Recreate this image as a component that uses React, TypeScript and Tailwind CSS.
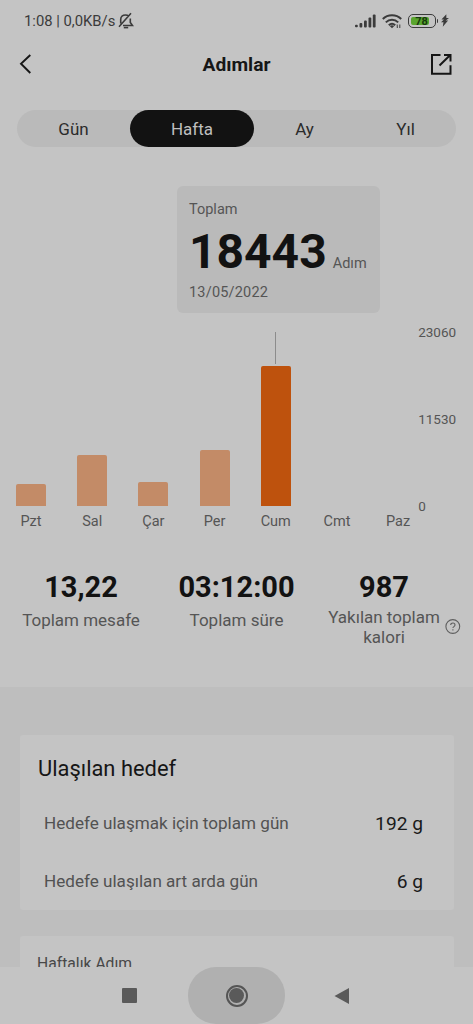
const days = [
  { label: 'Pzt', height: 22 },
  { label: 'Sal', height: 51 },
  { label: 'Çar', height: 24.5 },
  { label: 'Per', height: 56 },
  { label: 'Cum', height: 140, active: true },
  { label: 'Cmt', height: 0 },
  { label: 'Paz', height: 0 },
];

function StatusBar() {
  return (
    <div className="flex h-[41px] shrink-0 items-center justify-between pr-[24px] pl-[24px] text-[#3b3b3b]">
      <div className="flex items-center gap-[3px]">
        <span className="text-[14.8px] leading-5 whitespace-pre">1:08 | 0,0KB/s</span>
        <svg width="16" height="18" viewBox="0 0 16 18" fill="none" stroke="currentColor" strokeWidth="1.6">
          <path d="M2.700 11.500V7.500C2.700 4.500 4.700 3 7.500 3c1.200 0 2.300.3 3.100 1M12.300 6.500V10.500l2.200 3H5M13 1.300 1 14.700" />
          <path d="M5.800 15.600h4.400" />
        </svg>
      </div>
      <div className="flex items-center">
        <svg width="21" height="14" viewBox="0 0 21 14" fill="currentColor">
          <rect x="0" y="10.800" width="2.800" height="2.500" rx="1" />
          <rect x="4.500" y="9" width="2.800" height="4.500" rx="1" />
          <rect x="9" y="6.500" width="2.800" height="7" rx="1" />
          <rect x="13.500" y="3.500" width="2.800" height="10" rx="1" />
          <rect x="17.800" y="0.500" width="2.800" height="13" rx="1" />
        </svg>
        <svg className="ml-[6px]" width="20" height="16" viewBox="0 0 20 16" fill="none" stroke="currentColor" strokeWidth="2">
          <path d="M.8 6c5-5 13.400-5 18.400 0M3.800 9.400c3.600-3.500 8.800-3.500 12.400 0M6.800 12.200c1.900-1.800 4.500-1.800 6.400 0" />
          <path d="m10 15.300-2.300-2.300q2.300-1.400 4.600 0z" fill="currentColor" stroke="none" />
          <path d="m15.200 11.500.1 3.500M17.800 11.500v3.500" strokeWidth="1" />
        </svg>
        <div className="ml-[6px] flex h-[14px] w-[28px] items-center rounded-[5px] border-[1.500px] border-[#3b3b3b] p-[2px]">
          <div className="flex h-full w-[18px] items-center justify-center rounded-[2px] bg-[#59a52d] pt-px pl-[4px] text-[11px] leading-none font-bold text-[#163a0d]">
            78
          </div>
        </div>
        <div className="ml-[1px] h-[4px] w-[1.500px] rounded-r bg-[#3b3b3b]" />
        <svg className="ml-[3px]" width="8" height="13" viewBox="0 0 9 14" fill="currentColor">
          <path d="M6 0 .5 6h2.800L0 9h2.800L2 14l6-7H5.300L9 4.300H6z" />
        </svg>
      </div>
    </div>
  );
}

function Header() {
  return (
    <div className="flex h-12 shrink-0 items-center justify-between pr-[19px] pl-[18px] text-[#161616]">
      <svg width="24" height="24" viewBox="0 0 24 24" fill="none" stroke="currentColor" strokeWidth="1.900">
        <path d="M12.300 2 3 10.800l9.300 9.200" />
      </svg>
      <h1 className="pl-[1px] text-[19.200px] leading-6 font-bold">Adımlar</h1>
      <svg width="24" height="24" viewBox="0 0 24 24" fill="none" stroke="currentColor" strokeWidth="2">
        <path d="M10.500 2H2v18.700h18.500v-8.400M9.500 12.500 20 2.300M14 2h6.500V8.500" />
      </svg>
    </div>
  );
}

function Tabs() {
  return (
    <div className="mt-[21px] ml-[17px] flex h-[37px] w-[439px] shrink-0 items-center rounded-full bg-[#bababa] text-center text-[17px] leading-5 text-[#2b2b2b]">
      <div className="w-[113px] pt-px">Gün</div>
      <div className="flex h-full w-[124px] items-center justify-center rounded-full bg-[#121212] pt-px text-[#bfbfbf]">Hafta</div>
      <div className="w-[101px] pt-px">Ay</div>
      <div className="flex-1 pt-px">Yıl</div>
    </div>
  );
}

function Stat({ value, label }: { value: string; label: string }) {
  return (
    <div className="flex flex-col items-center">
      <div className="text-[29px] leading-8 font-bold text-[#121212]">{value}</div>
      <div className="mt-[7px] text-[17px] leading-5 text-[#555]">{label}</div>
    </div>
  );
}

function GoalRow({ label, value }: { label: string; value: string }) {
  return (
    <div className="flex h-[58px] items-center justify-between pr-[31px] pl-[24px]">
      <span className="text-[17.100px] text-[#525252]">{label}</span>
      <span className="text-[19.200px] text-[#1a1a1a]">{value}</span>
    </div>
  );
}

export default function App() {
  return (
    <div className="flex h-[1024px] w-[473px] flex-col overflow-hidden bg-[#c4c4c4] font-['Roboto',sans-serif]">
      <StatusBar />
      <Header />
      <Tabs />

      <div className="mt-[39px] ml-[177px] flex h-[127px] w-[203px] shrink-0 flex-col rounded-[6px] bg-[#bababa] pt-[14px] pl-[12px] text-[14.500px] text-[#555]">
        <div className="leading-5">Toplam</div>
        <div className="mt-[4px] flex items-baseline gap-[6px]">
          <span className="text-[48px] leading-[56px] font-bold text-[#121212]">18443</span>
          <span>Adım</span>
        </div>
        <div className="mt-[3px] leading-5 tracking-[0.2px]">13/05/2022</div>
      </div>

      <div className="mt-[19px] ml-4 flex h-[200px] shrink-0">
        <div className="flex gap-[31.200px]">
          {days.map((d) => (
            <div key={d.label} className="flex w-[30px] flex-col items-center">
              <div className="flex h-[174px] w-full flex-col items-center justify-end">
                {d.active && <div className="mb-[2px] w-px flex-1 bg-[#8c8c8c]" />}
                <div
                  className={d.active ? 'w-full rounded-t-[2px] bg-[#be520d]' : 'w-full rounded-t-[2px] bg-[#c38b67]'}
                  style={{ height: d.height }}
                />
              </div>
              <div className="mt-[7px] text-[14.500px] leading-[18px] whitespace-nowrap text-[#555]">{d.label}</div>
            </div>
          ))}
        </div>
        <div className="-mt-[9px] ml-[5px] flex h-[192px] flex-col justify-between text-[13.500px] leading-[18px] text-[#555]">
          <span>23060</span>
          <span>11530</span>
          <span>0</span>
        </div>
      </div>

      <div className="mt-[39px] flex h-[116px] shrink-0">
        <div className="w-[162px]">
          <Stat value="13,22" label="Toplam mesafe" />
        </div>
        <div className="w-[149px]">
          <Stat value="03:12:00" label="Toplam süre" />
        </div>
        <div className="flex flex-1 pl-[13px]">
          <div className="w-[120px] text-center">
            <div className="text-[29px] leading-8 font-bold text-[#121212]">987</div>
            <div className="mt-[4px] text-[17px] leading-5 text-[#555]">
              <span className="whitespace-nowrap">Yakılan toplam</span> kalori
            </div>
          </div>
          <svg className="mt-[48px] ml-px" width="16" height="16" viewBox="0 0 16 16" fill="none" stroke="#5f5f5f" strokeWidth="1.100">
            <circle cx="7.800" cy="7.500" r="6.900" />
            <path d="M5.700 6c0-2.700 4.300-2.600 4.300 0 0 1.600-2.100 1.600-2.100 3.100M7.900 10.200v1.300" />
          </svg>
        </div>
      </div>

      <div className="flex h-[280px] shrink-0 flex-col overflow-hidden bg-[#bebebe] pr-[19px] pl-5">
        <div className="mt-[48px] h-[175px] shrink-0 rounded-[3px] bg-[#c4c4c4] pt-[19px]">
          <h2 className="mb-[11px] pl-[18px] text-[21.900px] leading-[30px] text-[#161616]">Ulaşılan hedef</h2>
          <GoalRow label="Hedefe ulaşmak için toplam gün" value="192 g" />
          <GoalRow label="Hedefe ulaşılan art arda gün" value="6 g" />
        </div>
        <div className="mt-[26px] h-[60px] shrink-0 rounded-t-[3px] bg-[#c4c4c4] pt-[18px] pl-[17px] text-[15.700px] leading-5 text-[#484848]">
          Haftalık Adım
        </div>
      </div>

      <div className="flex h-[57px] shrink-0 items-center bg-[#c4c4c4]">
        <div className="ml-[122px] h-[15px] w-[15px] rounded-[1px] bg-[#5a5a5a]" />
        <div className="ml-[51px] flex h-full w-[97px] items-center justify-center rounded-[28px] bg-[#b0b0b0]">
          <div className="flex h-[22px] w-[22px] items-center justify-center rounded-full border-2 border-[#555]">
            <div className="h-[15px] w-[15px] rounded-full bg-[#5a5a5a]" />
          </div>
        </div>
        <svg className="ml-[49px]" width="15" height="16" viewBox="0 0 15 16" fill="#5a5a5a">
          <path d="M15 0v16L.5 8z" />
        </svg>
      </div>
    </div>
  );
}
